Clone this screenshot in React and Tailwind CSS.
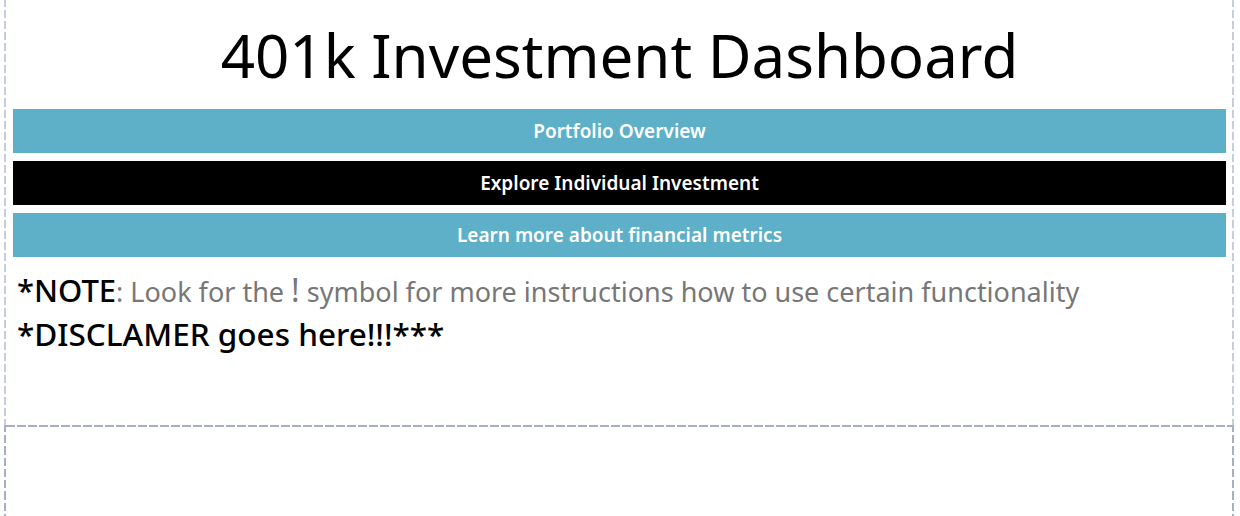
export default function App() {
  const links = [
    { label: "Portfolio Overview", active: false },
    { label: "Explore Individual Investment", active: true },
    { label: "Learn more about financial metrics", active: false },
  ];

  return (
    <div className="w-[1240px] h-[516px] bg-white overflow-hidden font-['Noto_Sans',sans-serif]">
      {/* upper container, dashed sides */}
      <div className="ml-[4px] w-[1230px] h-[421px] border-x-2 border-solid [border-image:repeating-linear-gradient(to_bottom,#c6cddd_0_8px,transparent_8px_11px)_1] pl-[7px] pr-[6px]">
        <h1 className="h-[109px] pt-[15px] text-center text-[60px] leading-[80px] text-black">
          401k Investment Dashboard
        </h1>
        <div className="flex flex-col gap-[8px]">
          {links.map((l) => (
            <button
              key={l.label}
              className={`h-[44px] w-full text-[19px] font-semibold text-white ${
                l.active ? "bg-black" : "bg-[#5eafc8]"
              }`}
            >
              {l.label}
            </button>
          ))}
        </div>
        <div className="mt-[11px] pl-[4px]">
          <p className="text-[31px] leading-[44px] font-medium text-black">
            *NOTE
            <span className="text-[27px] font-normal text-[#777777]">
              : Look for the <span className="text-[32px]">!</span> symbol for more instructions how to use certain functionality
            </span>
          </p>
          <p className="text-[31.5px] leading-[40px] font-medium text-black">*DISCLAMER goes here!!!***</p>
        </div>
      </div>
      <div className="ml-[4px] w-[1230px] h-[4px] border-x-2 border-solid [border-image:repeating-linear-gradient(to_bottom,#c6cddd_0_8px,transparent_8px_11px)_1]" />
      {/* lower empty container */}
      <div className="ml-[4px] w-[1230px] h-[91px] border-x-2 border-solid [border-image:repeating-linear-gradient(to_bottom,#a7afc5_0_8px,transparent_8px_11px)_1]">
        <div className="h-[2px] bg-[repeating-linear-gradient(to_right,#a7afc5_0_9px,transparent_9px_11px)]" />
      </div>
    </div>
  );
}
